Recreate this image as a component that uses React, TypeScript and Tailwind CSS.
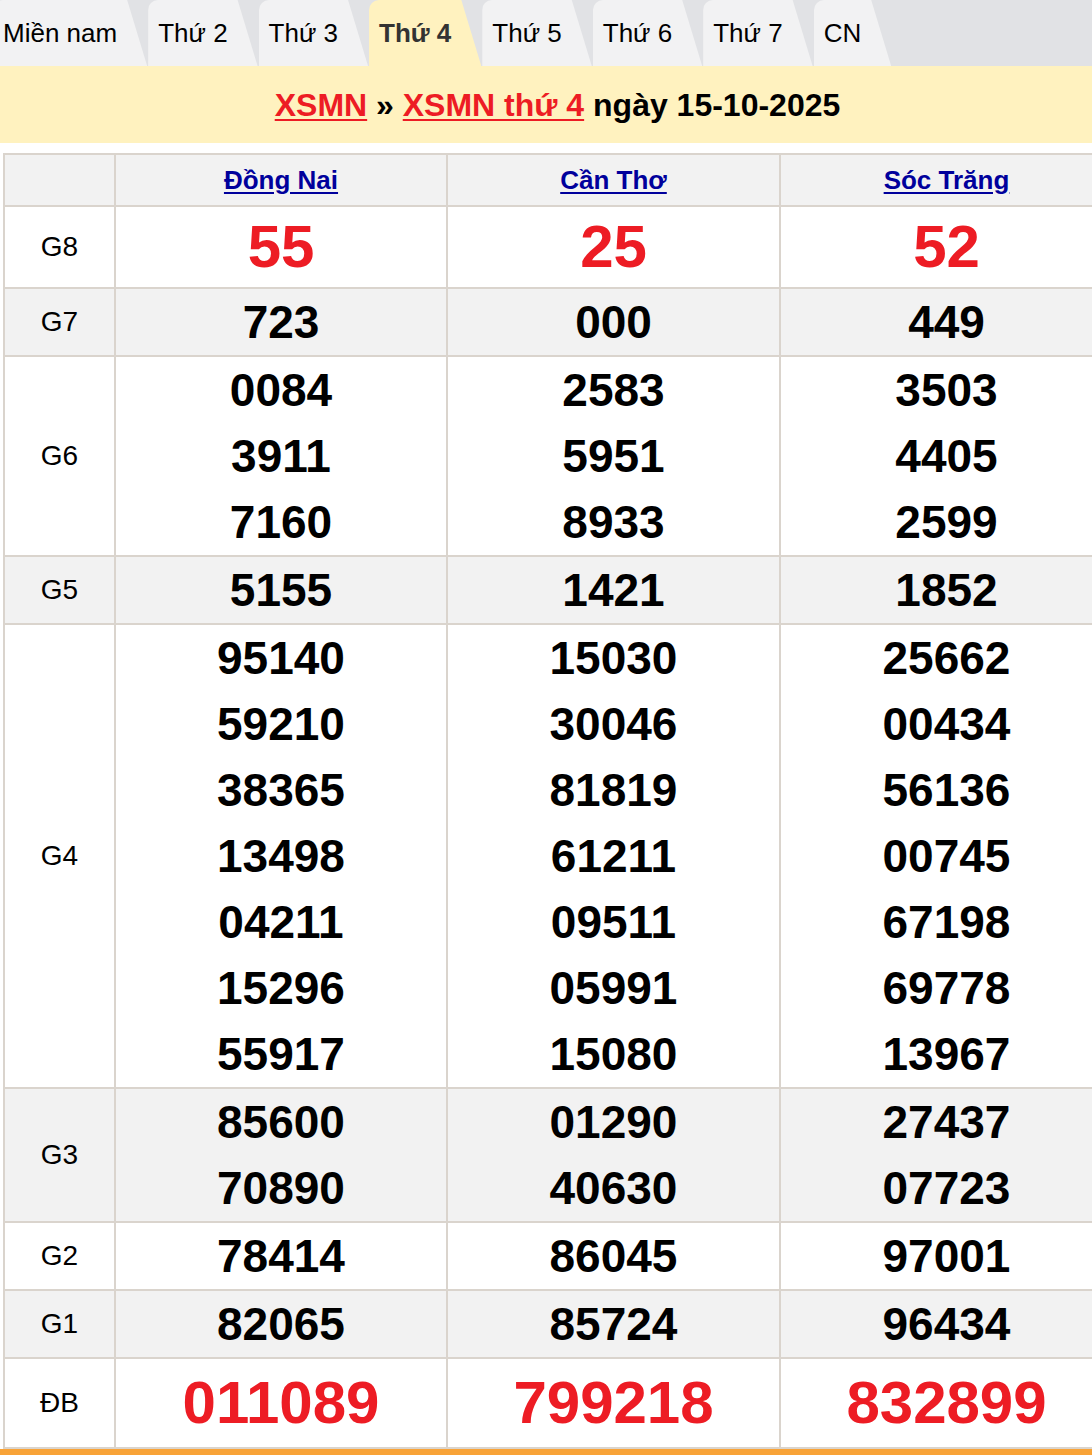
import React from "react";

const tabs = ["Miền nam", "Thứ 2", "Thứ 3", "Thứ 4", "Thứ 5", "Thứ 6", "Thứ 7", "CN"];

const provinces = ["Đồng Nai", "Cần Thơ", "Sóc Trăng"];

type Row = { label: string; values: string[][]; special?: boolean; h?: string };

// kết quả xổ số theo từng giải
const rows: Row[] = [
  { label: "G8", values: [["55"], ["25"], ["52"]], special: true, h: "leading-[80px]" },
  { label: "G7", values: [["723"], ["000"], ["449"]] },
  {
    label: "G6",
    values: [
      ["0084", "3911", "7160"],
      ["2583", "5951", "8933"],
      ["3503", "4405", "2599"],
    ],
  },
  { label: "G5", values: [["5155"], ["1421"], ["1852"]] },
  {
    label: "G4",
    values: [
      ["95140", "59210", "38365", "13498", "04211", "15296", "55917"],
      ["15030", "30046", "81819", "61211", "09511", "05991", "15080"],
      ["25662", "00434", "56136", "00745", "67198", "69778", "13967"],
    ],
  },
  {
    label: "G3",
    values: [
      ["85600", "70890"],
      ["01290", "40630"],
      ["27437", "07723"],
    ],
  },
  { label: "G2", values: [["78414"], ["86045"], ["97001"]] },
  { label: "G1", values: [["82065"], ["85724"], ["96434"]] },
  { label: "ĐB", values: [["011089"], ["799218"], ["832899"]], special: true, h: "leading-[88px]" },
];

export default function App() {
  return (
    <div className="w-[1092px] overflow-hidden bg-white font-['Liberation_Sans',Arial,sans-serif] text-black">
      <div className="w-[1115px]">
        {/* Thanh tab các ngày */}
        <div className="flex h-[66px] gap-[1px] bg-[#e1e2e5]">
          {tabs.map((t, i) => (
            <div
              key={t}
              className={
                (i === 0 ? "-ml-[7px] " : "") +
                (i === 3 ? "bg-[#fff2bf] font-bold text-[#333] " : "bg-[#f2f2f3] text-black ") +
                "flex h-[66px] items-center rounded-tl-[10px] pl-[10px] pr-[30px] text-[26px] [clip-path:polygon(0_0,calc(100%_-_20px)_0,100%_100%,0_100%)]"
              }
            >
              {t}
            </div>
          ))}
        </div>

        {/* Tiêu đề */}
        <div className="flex h-[77px] items-center justify-center bg-[#fff2bf] text-[32px] font-bold">
          <a href="#" className="text-[#ed1c24] underline decoration-2 underline-offset-[3px]">
            XSMN
          </a>
          <span className="whitespace-pre"> » </span>
          <a href="#" className="text-[#ed1c24] underline decoration-2 underline-offset-[3px]">
            XSMN thứ 4
          </a>
          <span className="whitespace-pre"> ngày 15-10-2025</span>
        </div>

        {/* Bảng kết quả */}
        <div className="ml-[3px] mt-[10px] grid grid-cols-[109px_330px_331px_331px] gap-[2px] bg-[#dad4cd] p-[2px]">
          <div className="h-[50px] bg-[#f2f2f2]" />
          {provinces.map((p) => (
            <div key={p} className="flex h-[50px] items-center justify-center bg-[#f2f2f2]">
              <a href="#" className="text-[26px] font-bold text-[#00009c] underline underline-offset-[3px]">
                {p}
              </a>
            </div>
          ))}

          {rows.map((r, idx) => {
            const bg = idx % 2 === 0 ? "bg-white" : "bg-[#f2f2f2]";
            return (
              <React.Fragment key={r.label}>
                <div className={`flex items-center justify-center text-[28px] ${bg}`}>{r.label}</div>
                {r.values.map((col, ci) => (
                  <div key={ci} className={`flex flex-col items-center ${bg}`}>
                    {col.map((n, ni) => (
                      <div
                        key={ni}
                        className={
                          r.special
                            ? `text-[60px] font-bold text-[#ed1c24] ${r.h}`
                            : "text-[46px] font-bold leading-[66px]"
                        }
                      >
                        {n}
                      </div>
                    ))}
                  </div>
                ))}
              </React.Fragment>
            );
          })}
        </div>
        <div className="h-[8px] bg-[#f8a338]" />
      </div>
    </div>
  );
}
